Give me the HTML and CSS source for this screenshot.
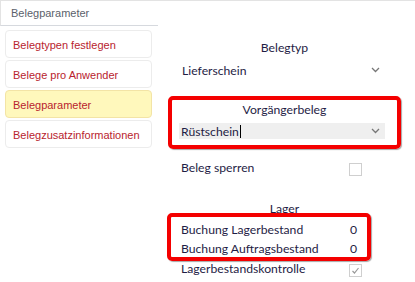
FILE: index.html
```html
<!DOCTYPE html>
<html lang="de">
<head>
    <meta charset="UTF-8">
    <title>Belegparameter</title>
    <link rel="stylesheet" href="styles.css">
</head>
<body>
<div class="page">
    <!-- Navigation -->
    <aside class="sidebar">
        <div class="sidebar-title">Belegparameter</div>
        <ul class="nav">
            <li class="nav-item">Belegtypen festlegen</li>
            <li class="nav-item">Belege pro Anwender</li>
            <li class="nav-item active">Belegparameter</li>
            <li class="nav-item">Belegzusatzinformationen</li>
        </ul>
    </aside>

    <!-- Form -->
    <main class="form">
        <div class="group-title">Belegtyp</div>
        <div class="select">
            <span>Lieferschein</span>
            <svg class="chevron" width="9" height="6" viewBox="0 0 9 6"><path d="M1 1 L4.5 4.5 L8 1" /></svg>
        </div>

        <div class="mark mark-wide">
            <div class="group-title">Vorgängerbeleg</div>
            <div class="select select-edit">
                <span>Rüstschein<i class="caret"></i></span>
                <svg class="chevron" width="9" height="6" viewBox="0 0 9 6"><path d="M1 1 L4.5 4.5 L8 1" /></svg>
            </div>
        </div>

        <div class="check-row check-first">
            <span>Beleg sperren</span>
            <span class="checkbox"></span>
        </div>

        <div class="group-title group-lager">Lager</div>
        <div class="mark mark-narrow">
            <div class="value-row">
                <span>Buchung Lagerbestand</span>
                <span class="value">0</span>
            </div>
            <div class="value-row">
                <span>Buchung Auftragsbestand</span>
                <span class="value">0</span>
            </div>
        </div>

        <div class="check-row check-last">
            <span>Lagerbestandskontrolle</span>
            <span class="checkbox checked">
                <svg width="11" height="11" viewBox="0 0 11 11"><path d="M2.5 6 L4.5 8 L8.5 3" /></svg>
            </span>
        </div>
    </main>
</div>
</body>
</html>
```

FILE: styles.css
```css
body {
    margin: 0;
    background: #fff;
}

.page {
    display: flex;
    height: 282px;
    border-top: 1px solid #e3e3e3;
    box-sizing: border-box;
}

/* Left navigation */
.sidebar {
    width: 158px;
    font-family: "Liberation Sans", Arial, sans-serif;
    font-size: 11px;
}

.sidebar-title {
    height: 24px;
    line-height: 25px;
    padding-left: 10px;
    color: #5b5f6b;
    border-left: 1px solid #e3e3e3;
    border-bottom: 1px solid #d6d9de;
}

.nav {
    list-style: none;
    margin: 0;
    padding: 4px 0 0 5px;
    display: flex;
    flex-direction: column;
    gap: 2px;
}

.nav-item {
    width: 147px;
    height: 28px;
    line-height: 28px;
    padding-left: 7px;
    box-sizing: border-box;
    border: 1px solid #ececec;
    border-radius: 4px;
    color: #b8232e;
}

.nav-item.active {
    background: #fff8bc;
    border-color: #f3e4a6;
}

/* Right form */
.form {
    flex: 1;
    display: flex;
    flex-direction: column;
    padding-top: 38px;
    font-family: Lato, "Open Sans", sans-serif;
    font-size: 12.2px;
    color: #1f1d45;
}

.group-title {
    height: 18px;
    line-height: 18px;
    width: 233px;
    margin-left: 10px;
    text-align: center;
}

.select {
    display: flex;
    align-items: center;
    justify-content: space-between;
    width: 206px;
    height: 20px;
    margin: 3px 0 0 21px;
    padding: 0 5px 0 3px;
    box-sizing: border-box;
}

.chevron path {
    fill: none;
    stroke: #777;
    stroke-width: 1.3;
}

/* red highlight frames */
.mark {
    border: 4px solid #f40000;
    border-radius: 5px;
    box-sizing: border-box;
    box-shadow: 1px 1px 1px rgba(0, 0, 0, 0.35);
}

.mark-wide {
    width: 233px;
    height: 53px;
    margin: 16px 0 0 10px;
    padding-top: 1px;
}

.mark-wide .group-title {
    width: auto;
    margin-left: 0;
}

.select-edit {
    height: 16px;
    margin: 4px 0 0 7px;
    padding-left: 2px;
    background: #efefef;
}

.caret {
    display: inline-block;
    width: 1px;
    height: 13px;
    margin-left: 1px;
    background: #000;
    vertical-align: -2px;
}

.check-row {
    display: flex;
    align-items: center;
    justify-content: space-between;
    width: 206px;
    height: 20px;
    margin-left: 21px;
    padding: 0 23px 0 2px;
    box-sizing: border-box;
}

.check-first {
    margin-top: 8px;
}

.check-last {
    margin-top: -2px;
    height: 18px;
}

.checkbox {
    width: 13px;
    height: 13px;
    box-sizing: border-box;
    border: 1px solid #cfcfcf;
    margin-top: 4px;
}

.checkbox svg {
    display: block;
    margin: 0;
}

.checkbox.checked path {
    fill: none;
    stroke: #9a9a9a;
    stroke-width: 1.2;
}

.group-lager {
    margin-top: 23px;
}

.mark-narrow {
    width: 204px;
    height: 48px;
    margin: -5px 0 0 9px;
    padding: 3px 10px 0 10px;
}

.value-row {
    display: flex;
    justify-content: space-between;
    height: 19px;
    line-height: 19px;
}
```
